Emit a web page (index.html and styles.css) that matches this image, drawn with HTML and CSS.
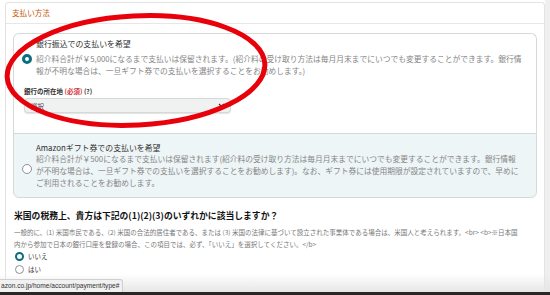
FILE: index.html
```html
<!DOCTYPE html>
<html lang="ja">
<head>
<meta charset="UTF-8">
<title>支払い方法</title>
<link rel="stylesheet" href="styles.css">
</head>
<body>
    <div class="page">
        <div class="card">
            <div class="card-head">支払い方法</div>
            <div class="card-body">
                <div class="options">
                    <div class="option first">
                        <div class="opt-title">銀行振込での支払いを希望</div>
                        <div class="opt-row">
                            <span class="radio on"></span>
                            <p class="opt-text">紹介料合計が￥5,000になるまで支払いは保留されます。(紹介料の受け取り方法は毎月月末までにいつでも変更することができます。銀行情<br>報が不明な場合は、一旦ギフト券での支払いを選択することをお勧めします。)</p>
                        </div>
                        <div class="field">
                            <div class="field-label">銀行の所在地 <span class="req">(必須)</span> (?)</div>
                            <div class="select">
                                <span>選択</span>
                                <svg width="7" height="5" viewBox="0 0 7 5"><path d="M1 1 L3.5 3.5 L6 1" fill="none" stroke="#333" stroke-width="1.2"/></svg>
                            </div>
                        </div>
                    </div>
                    <div class="option second">
                        <div class="opt-title">Amazonギフト券での支払いを希望</div>
                        <div class="opt-row mid">
                            <span class="radio"></span>
                            <p class="opt-text">紹介料合計が￥500になるまで支払いは保留されます(紹介料の受け取り方法は毎月月末までにいつでも変更することができます。銀行情報<br>が不明な場合は、一旦ギフト券での支払いを選択することをお勧めします)。なお、ギフト券には使用期限が設定されていますので、早めに<br>ご利用されることをお勧めします。</p>
                        </div>
                    </div>
                </div>

                <div class="question">
                    <div class="q-title">米国の税務上、貴方は下記の(1)(2)(3)のいずれかに該当しますか？</div>
                    <p class="q-text">一般的に、(1) 米国市民である、(2) 米国の合法的居住者である、または (3) 米国の法律に基づいて設立された事業体である場合は、米国人と考えられます。&lt;br&gt; &lt;b&gt;※日本国<br>内から参加で日本の銀行口座を登録の場合、この項目では、必ず、「いいえ」を選択してください。&lt;/b&gt;</p>
                    <div class="choice"><span class="radio small on"></span>いいえ</div>
                    <div class="choice"><span class="radio small"></span>はい</div>
                </div>
            </div>
        </div>
        <div class="track"></div>
    </div>

    <svg class="mark" width="550" height="295" viewBox="0 0 550 295">
        <ellipse cx="136" cy="70.5" rx="129" ry="54.5" transform="rotate(-3 136 70.5)" fill="none" stroke="#e8000b" stroke-width="5"/>
    </svg>

    <div class="fade"></div>
    <div class="status">azon.co.jp/home/account/payment/type#</div>
    <div class="dock"></div>
</body>
</html>
```

FILE: styles.css
```css
html, body {margin: 0; height: 295px; overflow: hidden; background: #fff;}
body {font-family: "Noto Sans CJK JP", "Noto Sans", sans-serif; color: #333;}
p {margin: 0;}

.page {display: flex; padding: 2px 0 0 5px; height: 293px;}
.card {flex: 1; border: 1px solid #e3e3e3; border-bottom: none; border-radius: 4px 4px 0 0;}
.track {width: 5px; margin-top: -2px; background: #efefef;}

.card-head {height: 20px; line-height: 20px; padding: 0 6px; font-size: 7.6px; color: #c45500; border-bottom: 1px solid #e7e7e7;}
.card-body {padding: 9px 7px 0 7px;}

.option {border: 1px solid #d5d9d9;}
.option.first {border-bottom: none; border-radius: 6px 6px 0 0; padding: 4px 0 20px 8px;}
.option.second {background: #eef5f7; border-radius: 0 0 6px 6px; padding: 7.5px 0 8.5px 8px;}

.opt-title {font-size: 7.9px; line-height: 11px; color: #2f2f2f; padding-left: 14px;}
.option.first .opt-title {margin-bottom: 4px;}
.opt-row {display: flex; align-items: flex-start; gap: 4px;}
.opt-row.mid {align-items: center;}
.opt-row.mid .radio {margin-bottom: 5px; background: #fff;}
.opt-text {font-size: 7.75px; line-height: 12px; color: #858585; white-space: nowrap;}

.radio {box-sizing: border-box; width: 10px; height: 10px; border-radius: 50%; border: 1px solid #8d9096; margin-top: 1px; flex: none; background: #fff;}
.radio.on {border: 3px solid #0a6e80;}
.radio.small {width: 9px; height: 9px; margin: 0;}
.radio.small.on {border-width: 2.7px;}

.field {margin: 9px 0 0 2px;}
.field-label {font-size: 6.5px; line-height: 10px; font-weight: bold; color: #333;}
.req {color: #d0343b;}
.select {box-sizing: border-box; width: 207px; height: 15px; margin-top: 2px; display: flex; align-items: center; justify-content: space-between; padding: 0 5px 0 6px; background: #f0f2f2; border: 1px solid #d5d9d9; border-radius: 4px; box-shadow: 0 1px 1px rgba(15, 17, 17, 0.12); font-size: 6.5px; color: #444;}

.question {padding-left: 1px;}
.q-title {margin-top: 12px; font-size: 8.8px; line-height: 12px; font-weight: bold; color: #111;}
.q-text {margin-top: 4px; font-size: 6.5px; line-height: 12px; color: #777; white-space: nowrap;}
.choice {display: flex; align-items: center; gap: 4px; padding-left: 1px; font-size: 6.5px; line-height: 13px; color: #333;}
.choice:first-of-type {margin-top: 1.5px;}

.mark {position: absolute; left: 0; top: 0; pointer-events: none;}
.fade {position: absolute; left: 0; right: 0; top: 274px; height: 18px; background: linear-gradient(to bottom, rgba(235, 235, 235, 0), #e6e6e6);}
.status {position: absolute; left: 0; top: 279px; height: 12px; line-height: 12px; padding: 0 3px 0 1px; background: #f1f1f1; border: 1px solid #cfcfcf; border-left: none; border-bottom: none; border-radius: 0 3px 0 0; font-family: "Liberation Sans", sans-serif; font-size: 6.6px; color: #333;}
.dock {position: absolute; left: 0; right: 0; top: 292px; height: 3px; background: #2b2624;}
```
